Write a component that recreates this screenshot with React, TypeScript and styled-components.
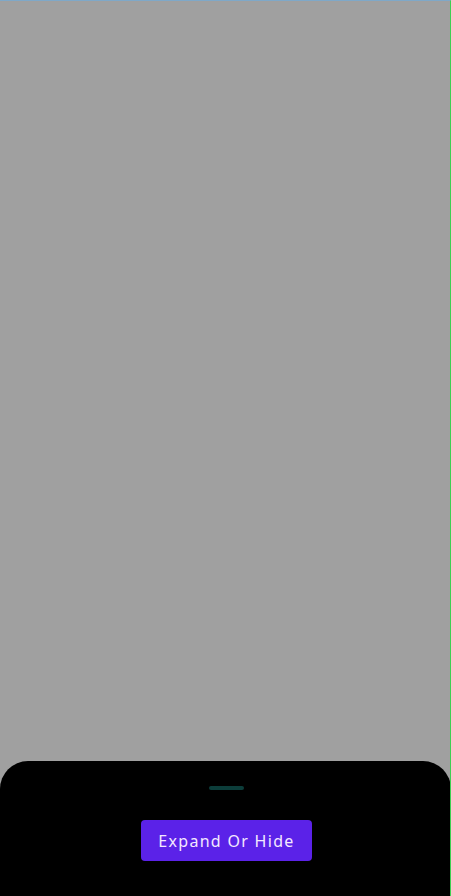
import React from 'react';
import styled, { createGlobalStyle } from 'styled-components';

const GlobalStyle = createGlobalStyle`
  html, body, #root {
    margin: 0;
    padding: 0;
    height: 100%;
  }
  body {
    font-family: "Noto Sans", "Open Sans", sans-serif;
    background: #a0a0a0;
  }
`;

const Screen = styled.div`
  height: 896px;
  display: flex;
  flex-direction: column;
  background: #a0a0a0;
  border-top: 1px solid #7fa8c8;
  border-right: 1px solid #3fcf52;
  box-sizing: border-box;
  overflow: hidden;
`;

const Scrim = styled.div`
  flex: 1;
`;

const Sheet = styled.div`
  height: 135px;
  margin-right: -1px;
  background: #000;
  border-radius: 28px 28px 0 0;
  display: flex;
  flex-direction: column;
  align-items: center;
  padding: 25px 0 0 2px;
  box-sizing: border-box;
`;

const Handle = styled.div`
  width: 35px;
  height: 4px;
  border-radius: 2px;
  background: #0c3d3a;
`;

const Button = styled.button`
  margin-top: 30px;
  width: 171px;
  height: 41px;
  border: none;
  border-radius: 4px;
  background: #5b22e8;
  color: #f3e8ff;
  font-family: "Noto Sans", "Open Sans", sans-serif;
  font-size: 16px;
  letter-spacing: 1.3px;
  padding: 0;
  cursor: pointer;
`;

const App: React.FC = () => {
  return (
    <>
      <GlobalStyle />
      <Screen>
        <Scrim />
        <Sheet>
          <Handle />
          <Button>Expand Or Hide</Button>
        </Sheet>
      </Screen>
    </>
  );
};

export default App;
